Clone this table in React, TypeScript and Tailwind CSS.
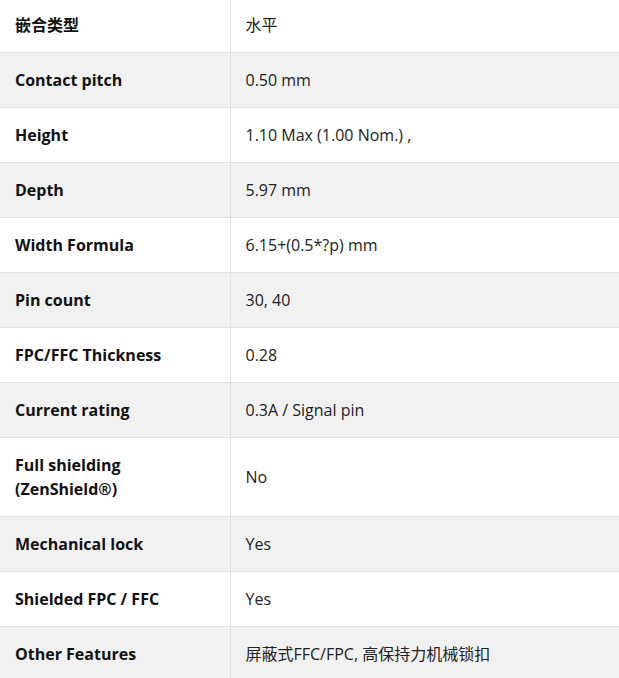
const rows: [string, string][] = [
  ['嵌合类型', '水平'],
  ['Contact pitch', '0.50 mm'],
  ['Height', '1.10 Max (1.00 Nom.) ,'],
  ['Depth', '5.97 mm'],
  ['Width Formula', '6.15+(0.5*?p) mm'],
  ['Pin count', '30, 40'],
  ['FPC/FFC Thickness', '0.28'],
  ['Current rating', '0.3A / Signal pin'],
  ['Full shielding (ZenShield®)', 'No'],
  ['Mechanical lock', 'Yes'],
  ['Shielded FPC / FFC', 'Yes'],
  ['Other Features', '屏蔽式FFC/FPC, 高保持力机械锁扣'],
]

export default function App() {
  return (
    <div
      className="w-[619px] h-[678px] overflow-hidden bg-white"
      style={{ fontFamily: '"Open Sans", "Noto Sans CJK SC", sans-serif' }}
    >
      <table className="-mt-[2px] w-full border-collapse text-[16px] leading-6">
        <tbody>
          {rows.map(([label, value], i) => (
            <tr key={label} className={i % 2 === 0 ? 'bg-white' : 'bg-[#f1f1f1]'}>
              <td className="w-[230px] border-b border-r border-[#e2e2e2] px-[15px] py-[15px] align-middle font-bold text-[#111]">
                {label === 'Full shielding (ZenShield®)' ? (
                  <>
                    Full shielding
                    <br />
                    (ZenShield®)
                  </>
                ) : (
                  label
                )}
              </td>
              <td className="border-b border-[#e2e2e2] px-[15px] py-[15px] align-middle text-[#222]">{value}</td>
            </tr>
          ))}
        </tbody>
      </table>
    </div>
  )
}
